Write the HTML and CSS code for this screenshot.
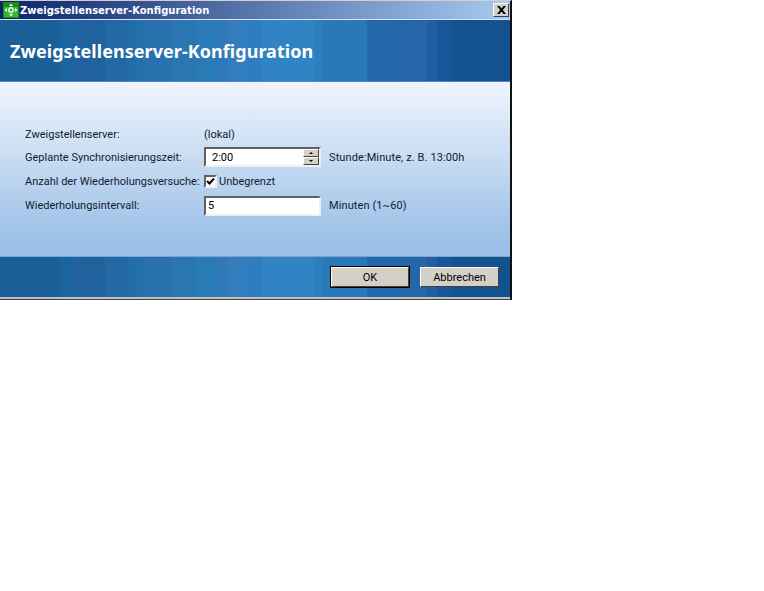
FILE: index.html
```html
<!DOCTYPE html>
<html lang="de">
<head>
<meta charset="utf-8">
<title>Zweigstellenserver-Konfiguration</title>
<link rel="stylesheet" href="styles.css">
</head>
<body>
<div class="window">
  <div class="titlebar">
    <svg class="app-icon" width="16" height="16" viewBox="0 0 16 16">
      <rect width="16" height="16" fill="#1d8a1d"/>
      <rect x="1" y="1" width="14" height="14" fill="#37b52f"/>
      <rect x="1" y="1" width="14" height="4" fill="#1c8c1c"/>
      <circle cx="8" cy="8" r="2.2" fill="none" stroke="#e6ffe6" stroke-width="1.4"/>
      <path d="M8 1.500 10 4H6ZM8 14.500 6 12h4ZM1.500 8 4 6v4ZM14.500 8 12 10V6Z" fill="#e6ffe6"/>
    </svg>
    <span class="title-text">Zweigstellenserver-Konfiguration</span>
    <button class="close" type="button" aria-label="Schließen">
      <svg width="9" height="8" viewBox="0 0 9 8"><path d="M0 0h2.500L4.500 2.600 6.500 0H9L5.800 4 9 8H6.500L4.500 5.400 2.500 8H0L3.200 4Z" fill="#000"/></svg>
    </button>
  </div>
  <header class="banner"><h1>Zweigstellenserver-Konfiguration</h1></header>
  <main class="content">
    <div class="form">
      <div class="label">Zweigstellenserver:</div>
      <div class="value">(lokal)</div>
      <div></div>

      <div class="label">Geplante Synchronisierungszeit:</div>
      <div class="spin field">
        <span class="spin-text">2:00</span>
        <span class="spin-btns">
          <span class="spin-btn"><i class="arrow up"></i></span>
          <span class="spin-btn"><i class="arrow down"></i></span>
        </span>
      </div>
      <div class="hint">Stunde:Minute, z. B. 13:00h</div>

      <div class="label">Anzahl der Wiederholungsversuche:</div>
      <div class="check-row">
        <span class="check">
          <svg width="9" height="9" viewBox="0 0 9 9"><path d="M1 4 3.500 6.500 8 1.500" fill="none" stroke="#000" stroke-width="2"/></svg>
        </span>
        <span>Unbegrenzt</span>
      </div>
      <div></div>

      <div class="label">Wiederholungsintervall:</div>
      <div class="field plain">5</div>
      <div class="hint">Minuten (1~60)</div>
    </div>
  </main>
  <footer class="actions">
    <button class="btn default" type="button">OK</button>
    <button class="btn" type="button">Abbrechen</button>
  </footer>
</div>
</body>
</html>
```

FILE: styles.css
```css
* { box-sizing: border-box; }
html, body { margin: 0; padding: 0; background: #fff; }
:root {
  --bands: linear-gradient(90deg,
    #1b5f99 0 59px, #1a64a0 59px 71px, #2062a2 71px 82px, #20629e 82px 105px,
    #2168a4 105px 127px, #226eaa 127px 137px, #266eaa 137px 145px, #2870ae 145px 172px,
    #2a76b0 172px 195px, #2a7ab6 195px 218px, #3078b8 218px 227px, #347cbc 227px 243px,
    #2f7cc0 243px 262px, #3084c4 262px 315px, #2a80bc 315px 323px, #2a78b8 323px 367px,
    #2468ac 367px 400px, #2566a8 400px 427px, #1f5f9f 427px 437px, #1b5599 437px 452px, #12528e 452px);
}
body {
  font-family: Roboto, sans-serif;
  font-size: 11px;
  color: #101c30;
}
.window {
  width: 512px;
  height: 300px;
  display: flex;
  flex-direction: column;
  border-top: 1px solid #d4d0c8;
  border-right: 2px solid #111;
  border-bottom: 1px solid #444;
  background: #fff;
}
.titlebar {
  height: 18px;
  flex: none;
  display: flex;
  align-items: center;
  padding: 0 1px 0 3px;
  background: linear-gradient(90deg, #0a246a 0%, #a6caf0 100%);
}
.app-icon { flex: none; }
.title-text {
  margin-left: 1px;
  color: #fff;
  font-family: "DejaVu Sans", sans-serif;
  font-weight: bold;
  font-size: 10px;
  flex: 1;
}
.close {
  width: 16px;
  height: 14px;
  padding: 0;
  display: flex;
  align-items: center;
  justify-content: center;
  background: #d4d0c8;
  border: 1px solid;
  border-color: #fff #404040 #404040 #fff;
}
.banner {
  height: 63px;
  flex: none;
  display: flex;
  align-items: center;
  padding: 1px 0 0 10px;
  border-top: 1px solid #d8e4f4;
  border-bottom: 1px solid #4e86c0;
  background: var(--bands);
}
.banner h1 {
  margin: 0;
  color: #fff;
  font-family: "Noto Sans", sans-serif;
  font-size: 18px;
  letter-spacing: 0.05px;
  font-weight: bold;
}
.content {
  flex: 1;
  padding: 41px 0 0 25px;
  border-bottom: 1px solid #7ba4cf;
  background: linear-gradient(180deg, #eff4ff 0%, #d4e4f6 30%, #9cc0e7 90%, #9cc0e7 100%);
}
.form {
  display: grid;
  grid-template-columns: 179px 117px auto;
  grid-template-rows: 22px 24px 25px 23px;
  align-items: center;
}
.label, .hint, .value, .check-row { white-space: nowrap; }
.hint { padding-left: 8px; letter-spacing: 0.1px; }
.field {
  height: 20px;
  background: #fff;
  border: 2px solid;
  border-color: #606060 #f0f0f0 #f0f0f0 #606060;
  color: #000;
}
.plain { padding: 0 2px; line-height: 16px; }
.spin {
  display: flex;
  align-items: center;
  justify-content: space-between;
  padding-left: 6px;
}
.spin-btns { display: flex; flex-direction: column; width: 16px; height: 16px; }
.spin-btn {
  flex: 1;
  display: flex;
  align-items: center;
  justify-content: center;
  background: #d4d0c8;
  border: 1px solid;
  border-color: #fff #404040 #404040 #fff;
}
.arrow { width: 0; height: 0; border-left: 2px solid transparent; border-right: 2px solid transparent; }
.arrow.up { border-bottom: 2px solid #000; }
.arrow.down { border-top: 2px solid #000; }
.check-row { display: flex; align-items: center; gap: 2px; }
.check {
  width: 13px;
  height: 13px;
  display: flex;
  align-items: center;
  justify-content: center;
  background: #fff;
  border: 2px solid;
  border-color: #606060 #f0f0f0 #f0f0f0 #606060;
}
.actions {
  height: 42px;
  flex: none;
  display: flex;
  justify-content: flex-end;
  align-items: flex-start;
  gap: 11px;
  padding: 10px 11px 0 0;
  border-bottom: 2px solid #c0c0c0;
  background: var(--bands);
}
.btn {
  width: 79px;
  height: 20px;
  padding: 0;
  font: inherit;
  color: #000;
  background: #d4d0c8;
  border: 1px solid;
  border-color: #fff #404040 #404040 #fff;
}
.btn.default { outline: 1px solid #000; width: 78px; }
```
